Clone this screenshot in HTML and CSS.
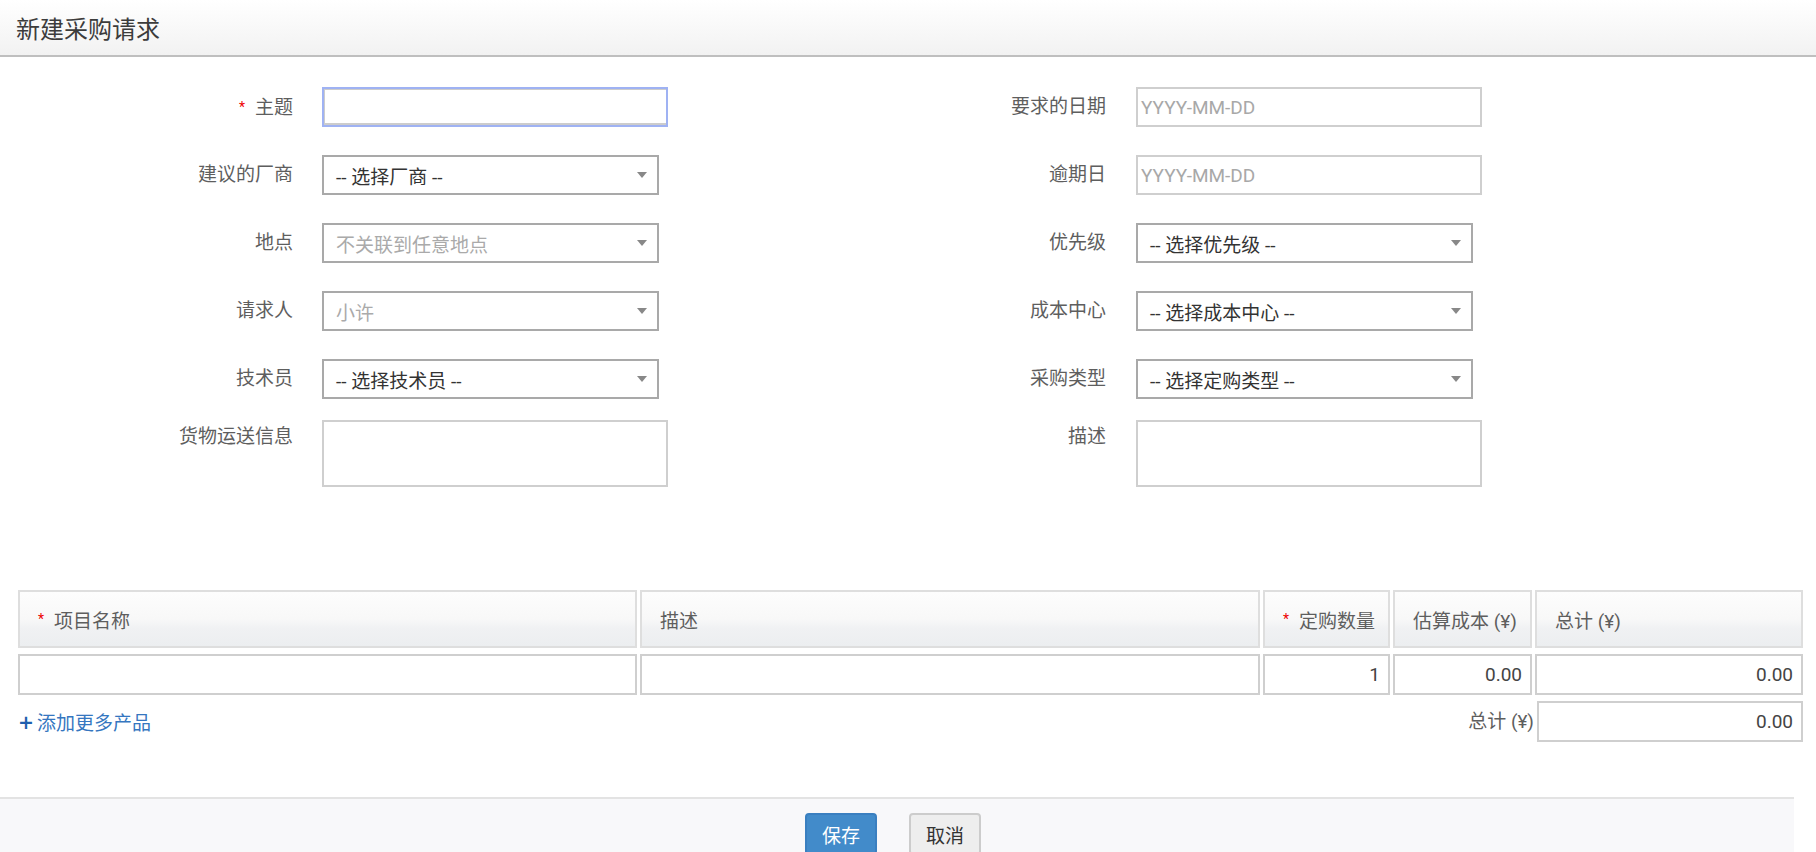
FILE: index.html
```html
<!DOCTYPE html>
<html lang="zh-CN">
<head>
<meta charset="utf-8">
<title>新建采购请求</title>
<link rel="stylesheet" href="styles.css">
</head>
<body>
<div class="page">
  <header class="topbar"><h1 class="title">新建采购请求</h1></header>

  <section class="form">
    <div class="lbl"><span class="req">*</span>主题</div>
    <div class="fld"><div class="txt txt-focus"></div></div>
    <div class="lbl">要求的日期</div>
    <div class="fld"><div class="txt"><span class="ph">YYYY-MM-DD</span></div></div>

    <div class="lbl">建议的厂商</div>
    <div class="fld"><div class="sel"><span class="val">-- 选择厂商 --</span><svg class="arrow" width="10" height="6" viewBox="0 0 10 6"><path d="M0 0H10L5 6Z" fill="#888"/></svg></div></div>
    <div class="lbl">逾期日</div>
    <div class="fld"><div class="txt"><span class="ph">YYYY-MM-DD</span></div></div>

    <div class="lbl">地点</div>
    <div class="fld"><div class="sel"><span class="val dim">不关联到任意地点</span><svg class="arrow" width="10" height="6" viewBox="0 0 10 6"><path d="M0 0H10L5 6Z" fill="#888"/></svg></div></div>
    <div class="lbl">优先级</div>
    <div class="fld"><div class="sel"><span class="val">-- 选择优先级 --</span><svg class="arrow" width="10" height="6" viewBox="0 0 10 6"><path d="M0 0H10L5 6Z" fill="#888"/></svg></div></div>

    <div class="lbl">请求人</div>
    <div class="fld"><div class="sel"><span class="val dim">小许</span><svg class="arrow" width="10" height="6" viewBox="0 0 10 6"><path d="M0 0H10L5 6Z" fill="#888"/></svg></div></div>
    <div class="lbl">成本中心</div>
    <div class="fld"><div class="sel"><span class="val">-- 选择成本中心 --</span><svg class="arrow" width="10" height="6" viewBox="0 0 10 6"><path d="M0 0H10L5 6Z" fill="#888"/></svg></div></div>

    <div class="lbl">技术员</div>
    <div class="fld"><div class="sel"><span class="val">-- 选择技术员 --</span><svg class="arrow" width="10" height="6" viewBox="0 0 10 6"><path d="M0 0H10L5 6Z" fill="#888"/></svg></div></div>
    <div class="lbl">采购类型</div>
    <div class="fld"><div class="sel"><span class="val">-- 选择定购类型 --</span><svg class="arrow" width="10" height="6" viewBox="0 0 10 6"><path d="M0 0H10L5 6Z" fill="#888"/></svg></div></div>

    <div class="lbl lbl-top">货物运送信息</div>
    <div class="fld fld-area"><div class="area"></div></div>
    <div class="lbl lbl-top">描述</div>
    <div class="fld fld-area"><div class="area"></div></div>
  </section>

  <section class="items">
    <div class="th"><span class="req">*</span>项目名称</div>
    <div class="th">描述</div>
    <div class="th th-qty"><span class="req">*</span>定购数量</div>
    <div class="th">估算成本 (¥)</div>
    <div class="th">总计 (¥)</div>

    <div class="cell"></div>
    <div class="cell"></div>
    <div class="cell num">1</div>
    <div class="cell num">0.00</div>
    <div class="cell num">0.00</div>

    <a class="add" href="#"><span class="plus">+</span>添加更多产品</a>
    <div class="sum-lbl">总计 (¥)</div>
    <div class="cell num sum">0.00</div>
  </section>

  <footer class="actions">
    <button class="btn btn-primary">保存</button>
    <button class="btn btn-default">取消</button>
  </footer>
</div>
</body>
</html>
```

FILE: styles.css
```css
* { box-sizing: border-box; }
html, body { margin: 0; padding: 0; background: #fff; }
body {
  font-family: Roboto, "Noto Sans CJK SC", sans-serif;
  color: #5e5e5e;
  font-size: 19px;
  width: 1816px;
  height: 852px;
  overflow: hidden;
}
.page { width: 1816px; }

.topbar {
  height: 57px;
  background: linear-gradient(#ffffff, #f2f2f2);
  border-bottom: 2px solid #bfbfbf;
  display: flex;
  align-items: center;
  padding-left: 16px;
}
.title {
  margin: 0;
  font-size: 24px;
  font-weight: normal;
  color: #3c3c3c;
}

.form {
  display: grid;
  grid-template-columns: 322px 346px 468px 346px;
  row-gap: 28px;
  padding-top: 30px;
}
.lbl {
  text-align: right;
  padding-right: 29px;
  line-height: 40px;
  height: 40px;
  color: #5e5e5e;
  white-space: nowrap;
}
.form .lbl:nth-child(4n+3) { padding-right: 30px; }
.lbl-top { line-height: 34px; margin-top: -7px; }
.req {
  color: #e00;
  font-size: 14px;
  margin-right: 10px;
  vertical-align: 2px;
}
.fld { height: 40px; }
.fld-area { height: 67px; margin-top: -7px; }

.txt {
  height: 40px;
  width: 346px;
  border: 2px solid #cfcfcf;
  background: #fff;
  padding-left: 3px;
  display: flex;
  align-items: center;
}
.txt-focus {
  border: 2px solid #9fb2f3;
  box-shadow: inset 1px 1px 0 #ccc, inset 0 -2px 0 #ccc;
}
.ph { color: #a8a8a8; font-size: 19px; }

.sel {
  height: 40px;
  width: 337px;
  border: 2px solid #a9a9a9;
  background: #fff;
  display: flex;
  align-items: center;
  padding: 0 12px 0 12px;
}
.val { flex: 1; color: #333; white-space: nowrap; }
.val.dim { color: #aaa; }
.arrow { flex: none; margin-right: -2px; }

.area {
  height: 67px;
  width: 346px;
  border: 2px solid #cfcfcf;
  background: #fff;
}

.items {
  margin-top: 103px;
  margin-left: 18px;
  display: grid;
  grid-template-columns: 619px 620px 127px 139px 268px;
  column-gap: 3px;
  row-gap: 6px;
}
.th {
  height: 58px;
  border: 2px solid #dedede;
  background: linear-gradient(#fdfdfd 0%, #f8f8f8 50%, #f0f1f3 68%, #eceef0 100%);
  display: flex;
  align-items: center;
  padding-left: 18px;
  color: #5e5e5e;
  white-space: nowrap;
}
.th .req { margin-right: 10px; }
.cell {
  height: 41px;
  border: 2px solid #cfcfcf;
  background: #fff;
  color: #444;
  display: flex;
  align-items: center;
  justify-content: flex-end;
  padding-right: 8px;
}
.add {
  grid-column: 1 / 4;
  color: #3576c0;
  text-decoration: none;
  display: flex;
  align-items: center;
  height: 41px;
}
.plus { color: #1f5fae; font-weight: bold; margin-right: 3px; font-family: "DejaVu Sans", sans-serif; }
.sum-lbl {
  grid-column: 4 / 5;
  text-align: right;
  line-height: 41px;
  color: #5e5e5e;
  margin-right: -2px;
}
.sum { margin-left: 2px; }

.actions {
  margin-top: 55px;
  width: 1794px;
  height: 62px;
  background: #f8f8fa;
  border-top: 2px solid #e3e3e3;
  display: flex;
  justify-content: center;
  align-items: flex-start;
  gap: 32px;
  padding-top: 14px;
  padding-right: 8px;
}
.btn {
  width: 72px;
  height: 42px;
  font-family: Roboto, "Noto Sans CJK SC", sans-serif;
  font-size: 19px;
  border-radius: 4px;
  padding: 0;
  cursor: pointer;
}
.btn-primary {
  background: #428bca;
  border: 2px solid #3a7fc0;
  color: #fff;
}
.btn-default {
  background: #eeeeee;
  border: 2px solid #cccccc;
  color: #333;
}
```
